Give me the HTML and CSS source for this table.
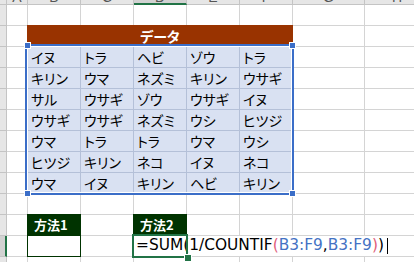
FILE: index.html
```html
<!DOCTYPE html>
<html lang="ja">
<head>
<meta charset="utf-8">
<title>データ</title>
<link rel="stylesheet" href="styles.css">
</head>
<body>
<div class="sheet">
  <div class="corner"></div>
  <div class="ch"><span>A</span></div>
  <div class="ch"><span>B</span></div>
  <div class="ch"><span>C</span></div>
  <div class="ch on"><span>D</span></div>
  <div class="ch"><span>E</span></div>
  <div class="ch"><span>F</span></div>
  <div class="ch"><span>G</span></div>
  <div class="ch"><span>H</span></div>

  <div class="rh"></div>
  <div class="c"></div><div class="c"></div><div class="c"></div><div class="c"></div>
  <div class="c"></div><div class="c"></div><div class="c"></div><div class="c"></div>

  <div class="rh"></div>
  <div class="c"></div>
  <div class="title">データ</div>
  <div class="c"></div><div class="c"></div>

  <div class="range">
    <div class="d">イヌ</div><div class="d">トラ</div><div class="d">ヘビ</div><div class="d">ゾウ</div><div class="d">トラ</div>
    <div class="d">キリン</div><div class="d">ウマ</div><div class="d">ネズミ</div><div class="d">キリン</div><div class="d">ウサギ</div>
    <div class="d">サル</div><div class="d">ウサギ</div><div class="d">ゾウ</div><div class="d">ウサギ</div><div class="d">イヌ</div>
    <div class="d">ウサギ</div><div class="d">ウサギ</div><div class="d">ネズミ</div><div class="d">ウシ</div><div class="d">ヒツジ</div>
    <div class="d">ウマ</div><div class="d">トラ</div><div class="d">トラ</div><div class="d">ウマ</div><div class="d">ウシ</div>
    <div class="d">ヒツジ</div><div class="d">キリン</div><div class="d">ネコ</div><div class="d">イヌ</div><div class="d">ネコ</div>
    <div class="d">ウマ</div><div class="d">イヌ</div><div class="d">キリン</div><div class="d">ヘビ</div><div class="d">キリン</div>
    <i class="h tl"></i><i class="h tr"></i><i class="h bl"></i><i class="h br"></i>
  </div>

  <div class="rh"></div><div class="c"></div><div class="c"></div><div class="c"></div>
  <div class="rh"></div><div class="c"></div><div class="c"></div><div class="c"></div>
  <div class="rh"></div><div class="c"></div><div class="c"></div><div class="c"></div>
  <div class="rh"></div><div class="c"></div><div class="c"></div><div class="c"></div>
  <div class="rh"></div><div class="c"></div><div class="c"></div><div class="c"></div>
  <div class="rh"></div><div class="c"></div><div class="c"></div><div class="c"></div>
  <div class="rh"></div><div class="c"></div><div class="c"></div><div class="c"></div>

  <div class="rh"></div>
  <div class="c"></div><div class="c"></div><div class="c"></div><div class="c"></div>
  <div class="c"></div><div class="c"></div><div class="c"></div><div class="c"></div>

  <div class="rh"></div>
  <div class="c"></div>
  <div class="hd">方法1</div>
  <div class="c"></div>
  <div class="hd">方法2</div>
  <div class="c"></div><div class="c"></div><div class="c"></div><div class="c"></div>

  <div class="rh on"></div>
  <div class="c"></div>
  <div class="inbox"></div>
  <div class="c"></div>
  <div class="fx"><span class="k">=SUM(1/COUNTIF</span><span class="p">(</span><span class="r">B3:F9</span><span class="k">,</span><span class="r">B3:F9</span><span class="p">)</span><span class="k">)</span><span class="caret"></span><i class="fill"></i></div>
  <div class="c nb"></div><div class="c nb"></div><div class="c nb"></div><div class="c nb"></div>

  <div class="rh"></div>
  <div class="c"></div><div class="c"></div><div class="c"></div><div class="c"></div>
  <div class="c"></div><div class="c"></div><div class="c"></div><div class="c"></div>
</div>
</body>
</html>
```

FILE: styles.css
```css
* {
  box-sizing: border-box;
  margin: 0;
  padding: 0;
}

html,
body {
  width: 414px;
  height: 262px;
  overflow: hidden;
  background: #ffffff;
}

body {
  font-family: "Noto Sans CJK JP", "Noto Sans", sans-serif;
  color: #000000;
}

.sheet {
  display: grid;
  grid-template-columns: 7px 21px repeat(5, 53px) 72px 1fr;
  grid-template-rows: 5px repeat(12, 21px) 1fr;
  width: 430px;
  height: 272px;
}

.c {
  border-right: 1px solid #d4d4d4;
  border-bottom: 1px solid #d4d4d4;
}

.c.nb {
  border-right: none;
}

.corner {
  background: #e6e6e6;
  border-right: 1px solid #c4c4c4;
  border-bottom: 1px solid #c4c4c4;
}

.ch {
  background: #e6e6e6;
  border-right: 1px solid #c4c4c4;
  border-bottom: 1px solid #c4c4c4;
  overflow: hidden;
  text-align: center;
  font-family: "Liberation Sans", sans-serif;
  font-size: 14px;
  color: #555555;
}

.ch span {
  display: block;
  line-height: 16px;
  margin-top: -11px;
}

.ch.on {
  background: #d2d2d2;
  border-bottom: 2px solid #217346;
}

.rh {
  background: #e6e6e6;
  border-right: 1px solid #c4c4c4;
  border-bottom: 1px solid #c4c4c4;
}

.rh.on {
  background: #d2d2d2;
  border-right: 2px solid #217346;
}

.title {
  grid-column: span 5;
  margin: -1px 0 0 -1px;
  background: #993300;
  color: #ffffff;
  font-weight: 700;
  font-size: 14px;
  line-height: 22px;
  text-align: center;
  font-feature-settings: "palt";
}

.range {
  grid-column: 3 / 8;
  grid-row: 4 / 11;
  position: relative;
  display: grid;
  grid-template-columns: repeat(5, 53px);
  grid-template-rows: repeat(7, 21px);
  background: #d9e1f2;
}

.range::after {
  content: "";
  position: absolute;
  top: -3px;
  left: -3px;
  right: -1px;
  bottom: -1px;
  border: 2px solid #3b6ec8;
  box-shadow: inset 0 0 0 1px #ffffff;
  pointer-events: none;
}

.d {
  border-right: 1px solid #b4c0d8;
  border-bottom: 1px solid #b4c0d8;
  padding-left: 3px;
  font-size: 14px;
  line-height: 20px;
  color: #000000;
  font-feature-settings: "palt";
  white-space: nowrap;
}

.h {
  position: absolute;
  width: 7px;
  height: 7px;
  background: #3b6ec8;
  border: 1px solid #ffffff;
  z-index: 2;
}

.h.tl { left: -4px; top: -5px; }
.h.tr { right: -3px; top: -5px; }
.h.bl { left: -4px; bottom: -3px; }
.h.br { right: -3px; bottom: -3px; }

.hd {
  margin: -1px 0 0 -1px;
  background: #003300;
  color: #ffffff;
  font-weight: 700;
  font-size: 13px;
  line-height: 22px;
  padding-left: 7px;
  white-space: nowrap;
}

.inbox {
  margin: -1px 0 0 -1px;
  border: 1px solid #003300;
}

.fx {
  position: relative;
  white-space: nowrap;
  font-family: "DejaVu Sans", sans-serif;
  font-size: 15.4px;
  line-height: 18px;
  padding-left: 2px;
  color: #000000;
}

.fx::after {
  content: "";
  position: absolute;
  top: -2px;
  left: -2px;
  right: -1px;
  bottom: -1px;
  border: 2px solid #217346;
  pointer-events: none;
}

.fx .p {
  color: #e0607a;
}

.fx .r {
  color: #4472c4;
}

.caret {
  display: inline-block;
  width: 1px;
  height: 16px;
  margin-left: 3px;
  background: #000000;
  vertical-align: -4px;
}

.fill {
  position: absolute;
  right: -5px;
  bottom: -5px;
  width: 8px;
  height: 8px;
  background: #217346;
  border: 1px solid #ffffff;
  z-index: 2;
}
```
